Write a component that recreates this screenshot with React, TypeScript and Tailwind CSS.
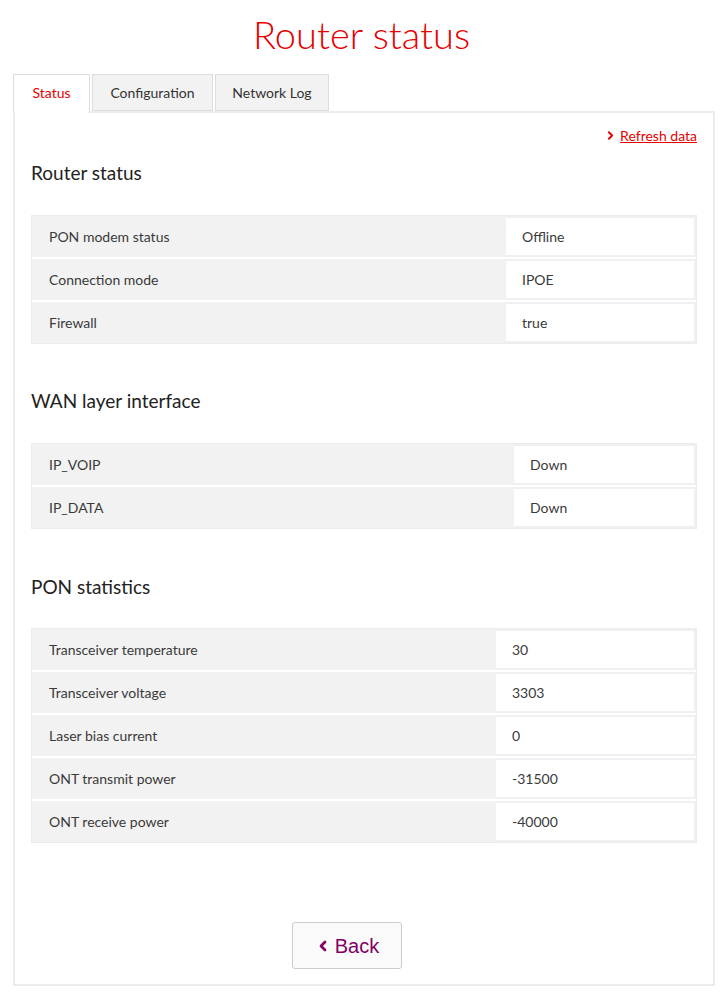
import { ChevronLeft, ChevronRight } from "lucide-react";

type Row = { label: string; value: string };

const routerRows: Row[] = [
  { label: "PON modem status", value: "Offline" },
  { label: "Connection mode", value: "IPOE" },
  { label: "Firewall", value: "true" },
];

const wanRows: Row[] = [
  { label: "IP_VOIP", value: "Down" },
  { label: "IP_DATA", value: "Down" },
];

const ponRows: Row[] = [
  { label: "Transceiver temperature", value: "30" },
  { label: "Transceiver voltage", value: "3303" },
  { label: "Laser bias current", value: "0" },
  { label: "ONT transmit power", value: "-31500" },
  { label: "ONT receive power", value: "-40000" },
];

function InfoTable({ rows, labelWidth }: { rows: Row[]; labelWidth: string }) {
  return (
    <div className="border border-[#ececec] bg-white">
      {rows.map((r, i) => (
        <div key={r.label} className={`flex ${i > 0 ? "h-[43px] border-t-2 border-white" : "h-[41px]"}`}>
          <div className={`${labelWidth} flex items-center bg-[#f2f2f2] pl-[17px] text-[14px] text-[#3a3a3a]`}>
            {r.label}
          </div>
          <div className="flex flex-1 items-center border-2 border-l-0 border-[#f0f0f4] bg-white pl-[16px] text-[14px] text-[#3a3a3a]">
            {r.value}
          </div>
        </div>
      ))}
    </div>
  );
}

export default function App() {
  return (
    <div className="min-h-screen bg-white font-['Lato',sans-serif] text-[#333]">
      <h1 className="pt-[10px] pb-[16px] text-center text-[38px] font-light leading-[48px] text-[#e60000]">
        Router status
      </h1>

      <div className="pl-[13px] pr-[8px]">
        <div className="flex items-end gap-[2px]">
          <div className="relative -mb-[2px] flex h-[39px] w-[77px] items-center justify-center border border-b-0 border-[#ddd] bg-white pb-[3px] text-[14px] text-[#e60000]">
            Status
          </div>
          <div className="flex h-[37px] w-[121px] items-center justify-center border border-[#ddd] bg-[#f2f2f2] text-[14px] text-[#333]">
            Configuration
          </div>
          <div className="flex h-[37px] w-[114px] items-center justify-center border border-[#ddd] bg-[#f2f2f2] text-[14px] text-[#333]">
            Network Log
          </div>
        </div>

        <div className="border-2 border-[#ececec] px-[16px] pb-[15px]">
          <div className="flex justify-end pt-[12px]">
            <a className="flex items-center gap-[3px] text-[14px] text-[#e60000] underline">
              <ChevronRight size={13} strokeWidth={3.5} />
              Refresh data
            </a>
          </div>

          <h2 className="mt-[14px] text-[19px] leading-[26px] text-[#222]">Router status</h2>
          <div className="mt-[29px]">
            <InfoTable rows={routerRows} labelWidth="w-[474px]" />
          </div>

          <h2 className="mt-[44px] text-[19px] leading-[26px] text-[#222]">WAN layer interface</h2>
          <div className="mt-[29px]">
            <InfoTable rows={wanRows} labelWidth="w-[482px]" />
          </div>

          <h2 className="mt-[45px] text-[19px] leading-[26px] text-[#222]">PON statistics</h2>
          <div className="mt-[28px]">
            <InfoTable rows={ponRows} labelWidth="w-[464px]" />
          </div>

          <div className="mt-[79px] flex justify-center pr-[34px]">
            <button className="flex h-[47px] w-[110px] items-center justify-center gap-[4px] rounded-[3px] border border-[#ccc] bg-[#fafafa] font-['Liberation_Sans',sans-serif] text-[20px] text-[#820063]">
              <ChevronLeft size={16} strokeWidth={4} />
              Back
            </button>
          </div>
        </div>
      </div>
    </div>
  );
}
